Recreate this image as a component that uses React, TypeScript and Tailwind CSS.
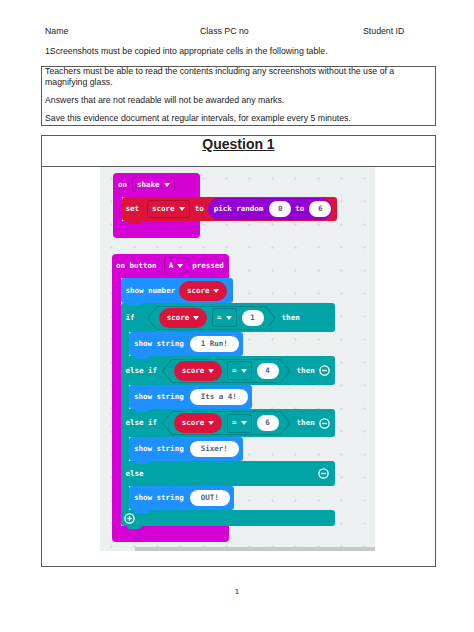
import type { ReactNode } from "react";

// white dropdown caret used on every field
function Caret() {
  return (
    <svg width="6" height="4" viewBox="0 0 6 4" className="shrink-0">
      <path d="M0 0h6L3 4z" fill="white" />
    </svg>
  );
}

function Field({ children, className = "" }: { children: ReactNode; className?: string }) {
  return (
    <span className={`flex items-center gap-[4px] rounded-[3px] border border-black/20 px-[4px] ${className}`}>
      {children}
      <Caret />
    </span>
  );
}

function NumberSlot({ value }: { value: string }) {
  return (
    <span className="flex h-[16px] w-[22px] items-center justify-center rounded-full bg-white text-[#575e75]">
      {value}
    </span>
  );
}

function TextSlot({ value }: { value: string }) {
  return (
    <span className="relative flex h-[16px] items-center whitespace-pre rounded-full bg-white px-[11px] text-[#575e75]">
      <span className="absolute left-[3px] top-[0px] font-['DejaVu_Sans',sans-serif] text-[8px] font-normal text-[#8c929a]">“</span>
      {value}
      <span className="absolute right-[3px] top-[0px] font-['DejaVu_Sans',sans-serif] text-[8px] font-normal text-[#8c929a]">”</span>
    </span>
  );
}

function ScoreReporter() {
  return (
    <span className="flex h-[20px] w-[48px] items-center justify-center gap-[4px] rounded-full bg-[#dc143c]">
      score
      <Caret />
    </span>
  );
}

// connector tab hanging under a statement block
function Tab({ className }: { className: string }) {
  return <span className={`absolute -bottom-[3px] left-[6px] z-10 h-[3px] w-[14px] rounded-b-[2px] ${className}`} />;
}

function RoundButton({ plus = false }: { plus?: boolean }) {
  return (
    <svg width="11" height="11" viewBox="0 0 11 11" className="shrink-0">
      <circle cx="5.5" cy="5.5" r="4.6" fill="none" stroke="white" strokeWidth="1.3" />
      <path d="M3.2 5.5h4.6" stroke="white" strokeWidth="1.4" />
      {plus ? <path d="M5.5 3.2v4.6" stroke="white" strokeWidth="1.4" /> : null}
    </svg>
  );
}

function Compare({ value }: { value: string }) {
  return (
    <span className="relative flex h-[24px] items-center gap-[5px] px-[12px]">
      <svg className="absolute inset-0 h-full w-full" viewBox="0 0 126 24" preserveAspectRatio="none">
        <polygon
          points="0.5,12 10,0.5 116,0.5 125.5,12 116,23.5 10,23.5"
          fill="#00a4a6"
          stroke="rgba(0,0,0,0.18)"
        />
      </svg>
      <span className="relative flex items-center gap-[5px]">
        <ScoreReporter />
        <Field className="h-[19px]">=</Field>
        <NumberSlot value={value} />
      </span>
    </span>
  );
}

function ShowString({ text }: { text: string }) {
  return (
    <div className="flex h-[24px]">
      <div className="w-[8.5px] bg-[#00a4a6]" />
      <div className="relative flex items-center gap-[6px] rounded-[3px] bg-[#1e90ff] pl-[5px] pr-[4px]">
        <span>show string</span>
        <TextSlot value={text} />
        <Tab className="bg-[#1e90ff]" />
      </div>
    </div>
  );
}

function ElseIf({ value, height }: { value: string; height: string }) {
  return (
    <div className={`flex items-center rounded-r-[3px] bg-[#00a4a6] pl-[5px] ${height}`}>
      <span className="w-[36.6px]">else if</span>
      <Compare value={value} />
      <span className="ml-[6px]">then</span>
      <span className="ml-[4px]">
        <RoundButton />
      </span>
    </div>
  );
}

function OnShake() {
  return (
    <div className="absolute left-[13px] top-[6px] flex flex-col items-start">
      <div className="flex h-[24px] w-[87px] items-center rounded-t-[4px] bg-[#d400d4] pl-[5px]">
        <span>on</span>
        <Field className="ml-[5px] h-[15px]">shake</Field>
      </div>
      <div className="flex">
        <div className="w-[8.5px] bg-[#d400d4]" />
        <div className="relative flex h-[24px] items-center rounded-[3px] bg-[#dc143c] pl-[4px] pr-[5px]">
          <span>set</span>
          <Field className="ml-[8px] h-[18px]">score</Field>
          <span className="ml-[5px]">to</span>
          <span className="ml-[4px] flex h-[22px] items-center rounded-full bg-[#9400d3] pl-[6px] pr-[1px]">
            <span>pick random</span>
            <span className="ml-[6px]">
              <NumberSlot value="0" />
            </span>
            <span className="ml-[4px]">to</span>
            <span className="ml-[5px]">
              <NumberSlot value="6" />
            </span>
          </span>
          <Tab className="bg-[#dc143c]" />
        </div>
      </div>
      <div className="h-[17px] w-[87px] rounded-b-[4px] bg-[#d400d4]" />
    </div>
  );
}

function OnButtonA() {
  return (
    <div className="absolute left-[12px] top-[87px] flex flex-col items-start">
      <div className="flex h-[24.5px] w-[117px] items-center rounded-t-[4px] bg-[#d400d4] pl-[4px]">
        <span>on button</span>
        <Field className="ml-[7px] h-[17px]">A</Field>
        <span className="ml-[4px]">pressed</span>
      </div>
      <div className="flex">
        <div className="w-[8.5px] bg-[#d400d4]" />
        <div className="flex flex-col items-start">
          <div className="relative flex h-[25px] w-[112px] items-center gap-[4px] rounded-[3px] bg-[#1e90ff] pl-[5px]">
            <span>show number</span>
            <ScoreReporter />
            <Tab className="bg-[#1e90ff]" />
          </div>
          <div className="flex w-[214px] flex-col">
            <div className="flex h-[29px] items-center rounded-t-[3px] rounded-br-[3px] bg-[#00a4a6] pl-[5px]">
              <span className="w-[21.6px]">if</span>
              <Compare value="1" />
              <span className="ml-[6px]">then</span>
            </div>
            <ShowString text="1 Run!" />
            <ElseIf value="4" height="h-[29px]" />
            <ShowString text="Its a 4!" />
            <ElseIf value="6" height="h-[28px]" />
            <ShowString text="Sixer!" />
            <div className="flex h-[25px] items-center justify-between rounded-r-[3px] bg-[#00a4a6] pl-[5px] pr-[6px]">
              <span>else</span>
              <RoundButton />
            </div>
            <ShowString text="OUT!" />
            <div className="relative flex h-[16px] items-center rounded-b-[3px] rounded-tr-[3px] bg-[#00a4a6] pl-[3px]">
              <RoundButton plus />
              <Tab className="bg-[#00a4a6]" />
            </div>
          </div>
        </div>
      </div>
      <div className="h-[16px] w-[117px] rounded-b-[4px] bg-[#d400d4]" />
    </div>
  );
}

function Workspace() {
  return (
    <div className="relative ml-[58px] h-[384px] w-[275px] bg-[#ecf0f1] bg-[radial-gradient(circle,#dadee0_1px,transparent_1.3px)] bg-[length:23px_23px] font-['DejaVu_Sans_Mono',monospace] text-[7.5px] font-bold leading-none text-white">
      <OnShake />
      <OnButtonA />
      <div className="absolute bottom-0 left-[35px] right-0 h-[4px] bg-[#c6c8c9]" />
    </div>
  );
}

export default function App() {
  return (
    <div className="h-[632px] w-[474px] bg-white pt-[25.5px] font-['Liberation_Sans',Arial,sans-serif] text-[8.75px] leading-[11px] text-[#222]">
      <div className="flex pl-[45px]">
        <span className="w-[155px]">Name</span>
        <span className="w-[163px]">Class PC no</span>
        <span>Student ID</span>
      </div>
      <p className="mt-[9px] pl-[45px]">1Screenshots must be copied into appropriate cells in the following table.</p>

      <div className="ml-[41px] mt-[9px] w-[395px] border border-[#5a5a5a] pb-[1px] pl-[3px]">
        <p className="-mt-[1px]">
          Teachers must be able to read the contents including any screenshots without the use of a
          <br />
          magnifying glass.
        </p>
        <p className="mt-[7px]">Answers that are not readable will not be awarded any marks.</p>
        <p className="mt-[7px]">Save this evidence document at regular intervals, for example every 5 minutes.</p>
      </div>

      <div className="ml-[41px] mt-[9px] w-[395px] border border-[#5a5a5a]">
        <div className="h-[31px] border-b border-[#5a5a5a] text-center">
          <span className="text-[14px] font-bold leading-[16px] underline">Question 1</span>
        </div>
        <div className="h-[399px]">
          <Workspace />
        </div>
      </div>

      <p className="mt-[19px] text-center text-[8px]">1</p>
    </div>
  );
}
